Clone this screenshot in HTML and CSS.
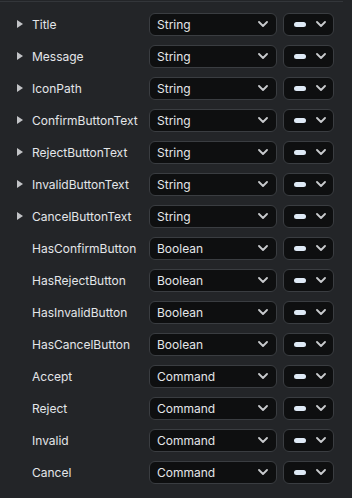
FILE: index.html
```html
<!DOCTYPE html>
<html lang="en">
<head>
    <meta charset="UTF-8">
    <title>Properties</title>
    <link rel="stylesheet" href="styles.css">
</head>
<body>
    <div class="panel" id="panel"></div>
    <script src="app.js"></script>
</body>
</html>
```

FILE: app.js
```js
const props = [
    ['Title', 'String', true],
    ['Message', 'String', true],
    ['IconPath', 'String', true],
    ['ConfirmButtonText', 'String', true],
    ['RejectButtonText', 'String', true],
    ['InvalidButtonText', 'String', true],
    ['CancelButtonText', 'String', true],
    ['HasConfirmButton', 'Boolean', false],
    ['HasRejectButton', 'Boolean', false],
    ['HasInvalidButton', 'Boolean', false],
    ['HasCancelButton', 'Boolean', false],
    ['Accept', 'Command', false],
    ['Reject', 'Command', false],
    ['Invalid', 'Command', false],
    ['Cancel', 'Command', false]
];

const chev = '<svg class="chev" width="10" height="6" viewBox="0 0 10 6"><polyline points="1,1 5,5 9,1" fill="none" stroke="#c9cbce" stroke-width="1.8" stroke-linecap="round" stroke-linejoin="round"/></svg>';

const panel = document.getElementById('panel');
props.forEach(([name, type, expandable]) => {
    const row = document.createElement('div');
    row.className = 'row';
    row.innerHTML =
        `<span class="${expandable ? 'arrow' : ''}"></span>` +
        `<span class="name">${name}</span>` +
        `<div class="select"><span>${type}</span>${chev}</div>` +
        `<div class="mode"><span class="pill"></span>${chev}</div>`;
    panel.appendChild(row);
});
```

FILE: styles.css
```css
* {
    margin: 0;
    padding: 0;
    box-sizing: border-box;
}
html, body {
    background: #232528;
    height: 100%;
}
body {
    font-family: Inter, "Noto Sans", sans-serif;
    font-size: 12px;
    color: #e4e6e9;
    padding-top: 1px;
}
.panel {
    width: 343px;
    border-top: 1px solid #33363a;
    padding-top: 6px;
}
.row {
    display: grid;
    grid-template-columns: 15px 117px 128px 57px;
    align-items: center;
    height: 32px;
    padding-left: 17px;
}
.arrow {
    width: 0;
    height: 0;
    border-top: 4px solid transparent;
    border-bottom: 4px solid transparent;
    border-left: 6px solid #c2c4c7;
}
.name {
    white-space: nowrap;
}
.select, .mode {
    height: 23px;
    background: #0e0f10;
    border: 1px solid #3a3d41;
    border-radius: 6px;
    display: flex;
    align-items: center;
    justify-content: space-between;
}
.select {
    padding: 0 8px 0 7px;
}
.mode {
    margin-left: 6px;
    padding: 0 7px 0 10px;
}
.pill {
    width: 12px;
    height: 5px;
    border-radius: 3px;
    background: #dfeaf6;
}
.chev {
    display: block;
}
```
